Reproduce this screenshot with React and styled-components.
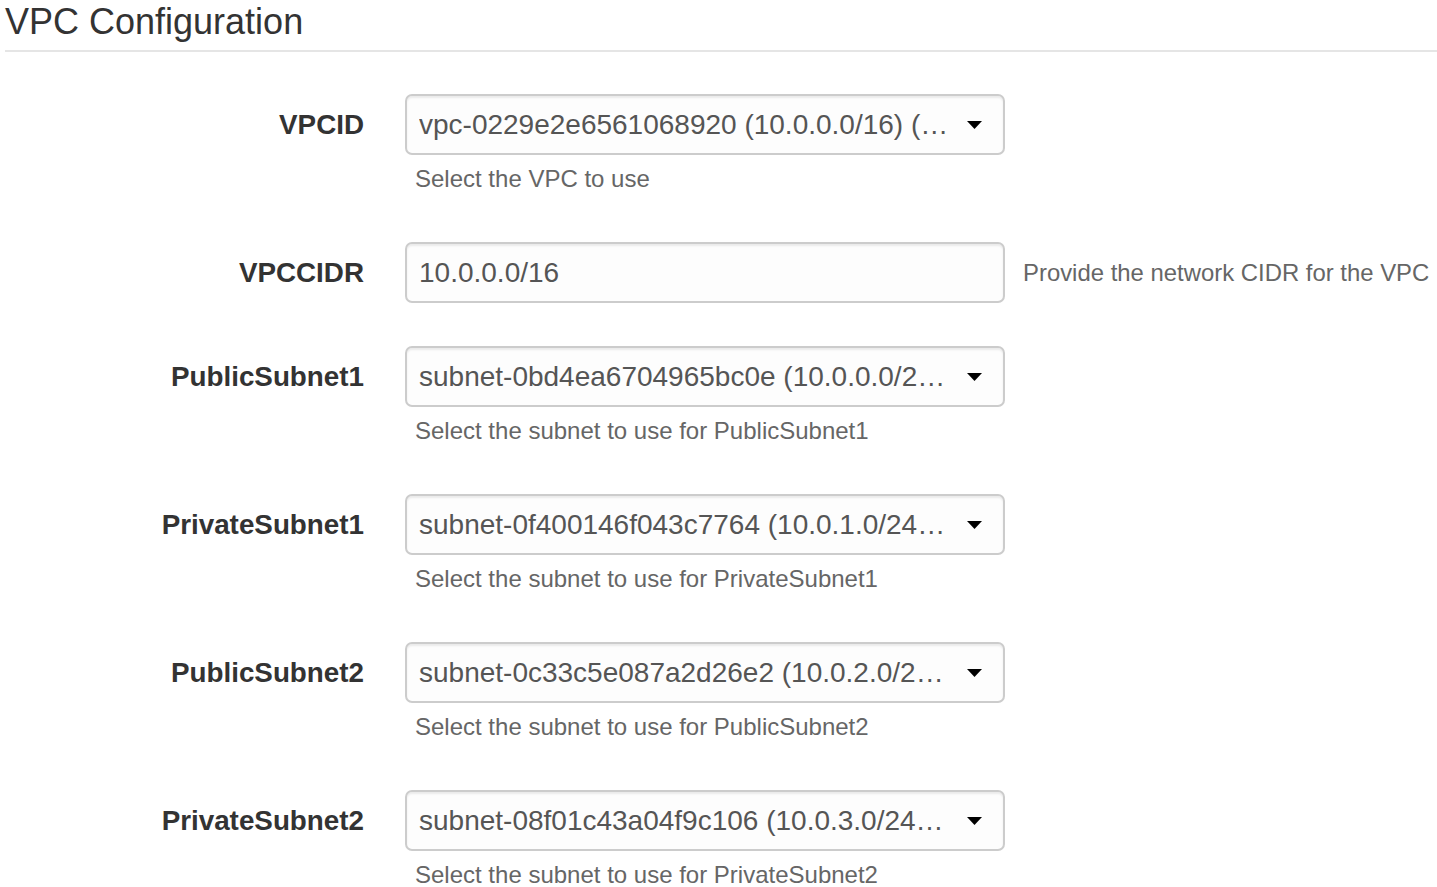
import styled, { createGlobalStyle } from 'styled-components'

const GlobalStyle = createGlobalStyle`
  body {
    margin: 0;
    background: #fff;
    font-family: "Liberation Sans", Arial, sans-serif;
  }
`

const params = [
  { name: 'VPCID', type: 'select', value: 'vpc-0229e2e6561068920 (10.0.0.0/16) (…', help: 'Select the VPC to use' },
  { name: 'VPCCIDR', type: 'text', value: '10.0.0.0/16', help: 'Provide the network CIDR for the VPC', side: true },
  { name: 'PublicSubnet1', type: 'select', value: 'subnet-0bd4ea6704965bc0e (10.0.0.0/2…', help: 'Select the subnet to use for PublicSubnet1' },
  { name: 'PrivateSubnet1', type: 'select', value: 'subnet-0f400146f043c7764 (10.0.1.0/24…', help: 'Select the subnet to use for PrivateSubnet1' },
  { name: 'PublicSubnet2', type: 'select', value: 'subnet-0c33c5e087a2d26e2 (10.0.2.0/2…', help: 'Select the subnet to use for PublicSubnet2' },
  { name: 'PrivateSubnet2', type: 'select', value: 'subnet-08f01c43a04f9c106 (10.0.3.0/24…', help: 'Select the subnet to use for PrivateSubnet2' },
]

export default function App() {
  return (
    <Page>
      <GlobalStyle />
      <Legend>VPC Configuration</Legend>
      <Form>
        {params.map((p) => (
          <Row key={p.name}>
            <Label>{p.name}</Label>
            <Field>
              {p.type === 'select' ? (
                <Select role='combobox'>
                  <SelectText>{p.value}</SelectText>
                  <Caret viewBox='0 0 15 8' width='15' height='8'>
                    <polygon points='0,0 15,0 7.5,8' fill='#000' />
                  </Caret>
                </Select>
              ) : (
                <TextInput defaultValue={p.value} readOnly />
              )}
              {!p.side && <Help>{p.help}</Help>}
            </Field>
            {p.side && <SideHelp>{p.help}</SideHelp>}
          </Row>
        ))}
      </Form>
    </Page>
  )
}

const Page = styled.div`
  padding-left: 5px;
`
const Legend = styled.div`
  font-size: 36px;
  line-height: 44px;
  color: #333;
  padding-bottom: 6px;
  border-bottom: 2px solid #e5e5e5;
`
const Form = styled.div`
  display: flex;
  flex-direction: column;
  gap: 43px;
  margin-top: 42px;
`
const Row = styled.div`
  display: flex;
  align-items: flex-start;
`
const Label = styled.div`
  width: 359px;
  margin-right: 41px;
  text-align: right;
  font-weight: bold;
  font-size: 27.8px;
  line-height: 61px;
  color: #333;
`
const Field = styled.div`
  width: 600px;
  display: flex;
  flex-direction: column;
`
const boxStyles = `
  box-sizing: border-box;
  width: 600px;
  height: 61px;
  border: 2px solid #cccccc;
  border-radius: 7px;
  background: #fdfdfd;
  box-shadow: inset 0 2px 2px rgba(0, 0, 0, 0.075);
  font-family: "Liberation Sans", Arial, sans-serif;
  font-size: 28px;
  color: #555;
`
const Select = styled.div`
  ${boxStyles}
  display: flex;
  align-items: center;
  padding: 0 21px 0 12px;
`
const SelectText = styled.span`
  flex: 1;
  white-space: nowrap;
  overflow: hidden;
  text-overflow: ellipsis;
  margin-right: 18px;
`
const Caret = styled.svg`
  flex: none;
  display: block;
`
const TextInput = styled.input`
  ${boxStyles}
  padding: 0 12px;
  outline: none;
`
const Help = styled.div`
  margin: 6px 0 2px 10px;
  font-size: 24px;
  line-height: 36px;
  color: #666;
`
const SideHelp = styled.div`
  margin-left: 18px;
  font-size: 23.9px;
  line-height: 61px;
  color: #666;
  white-space: nowrap;
`
